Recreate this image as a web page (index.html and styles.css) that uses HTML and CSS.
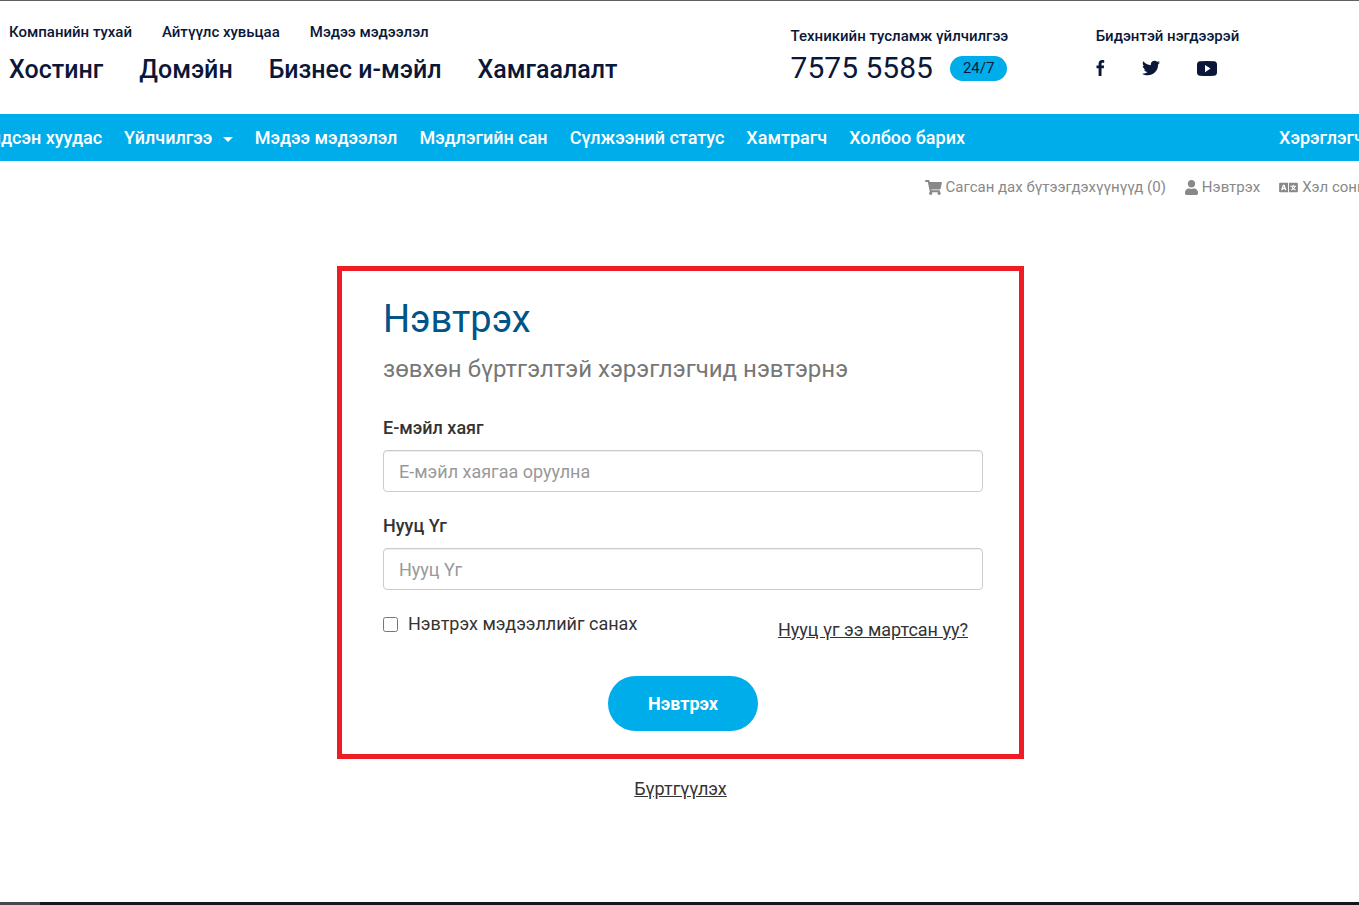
FILE: index.html
```html
<!DOCTYPE html>
<html lang="mn">
<head>
  <meta charset="UTF-8">
  <title>Нэвтрэх</title>
  <link rel="stylesheet" href="styles.css">
</head>
<body>
  <header class="header">
    <div>
      <nav class="top-links">
        <a href="#">Компанийн тухай</a>
        <a href="#">Айтүүлс хувьцаа</a>
        <a href="#">Мэдээ мэдээлэл</a>
      </nav>
      <nav class="main-links">
        <a href="#">Хостинг</a>
        <a href="#">Домэйн</a>
        <a href="#">Бизнес и-мэйл</a>
        <a href="#">Хамгаалалт</a>
      </nav>
    </div>
    <div class="support">
      <p class="small-title">Техникийн тусламж үйлчилгээ</p>
      <div class="phone-row">
        <a class="phone" href="tel:75755585">7575 5585</a>
        <span class="badge">24/7</span>
      </div>
    </div>
    <div class="social">
      <p class="small-title">Бидэнтэй нэгдээрэй</p>
      <div class="social-icons">
        <a href="#" aria-label="Facebook">
          <svg width="9" height="16" viewBox="0 0 9 16"><path d="M8.2.2v2.6H6.8c-1 0-1.3.5-1.3 1.2v1.6h2.6l-.3 2.6H5.500V16H2.600V8.200H.5V5.600h2.100V3.700C2.600 1.400 4 .1 6.100.1c1 0 1.800.1 2.100.1z"/></svg>
        </a>
        <a href="#" aria-label="Twitter">
          <svg width="18" height="18" viewBox="0 0 512 512"><path d="M459.400 151.700c.3 4.500.3 9.100.3 13.600 0 138.700-105.600 298.600-298.600 298.600-59.500 0-114.700-17.200-161.100-47.100 8.400 1 16.600 1.300 25.300 1.300 49.100 0 94.200-16.600 130.300-44.800-46.100-1-84.800-31.200-98.100-72.800 6.500 1 13 1.600 19.800 1.600 9.400 0 18.800-1.300 27.600-3.600-48.100-9.700-84.100-52-84.100-103v-1.300c14 7.800 30.200 12.700 47.400 13.300-28.300-18.800-46.800-51-46.800-87.400 0-19.500 5.200-37.400 14.300-53 51.700 63.700 129.300 105.300 216.400 109.800-1.600-7.800-2.600-15.900-2.600-24 0-57.800 46.800-104.900 104.900-104.900 30.200 0 57.500 12.700 76.700 33.100 23.700-4.500 46.500-13.300 66.600-25.300-7.800 24.400-24.400 44.800-46.100 57.800 21.100-2.300 41.600-8.100 60.400-16.200-14.300 20.800-32.200 39.300-52.600 54.300z"/></svg>
        </a>
        <a href="#" aria-label="YouTube">
          <svg width="20" height="15" viewBox="0 0 20 15"><path fill-rule="evenodd" d="M3 .3Q10-.3 17 .3 20 .5 20 3.500v8q0 3-3 3.300-7 .4-14 0-3-.3-3-3.300v-8Q0 .5 3 .3zM8 4v7.200l5.500-3.600z"/></svg>
        </a>
      </div>
    </div>
  </header>

  <nav class="navbar">
    <ul class="nav-list">
      <li><a href="#">Үндсэн хуудас</a></li>
      <li><a href="#">Үйлчилгээ <span class="caret"></span></a></li>
      <li><a href="#">Мэдээ мэдээлэл</a></li>
      <li><a href="#">Мэдлэгийн сан</a></li>
      <li><a href="#">Сүлжээний статус</a></li>
      <li><a href="#">Хамтрагч</a></li>
      <li><a href="#">Холбоо барих</a></li>
    </ul>
    <a class="nav-account" href="#">Хэрэглэгч</a>
  </nav>

  <div class="user-bar">
    <a href="#">
      <svg width="17" height="15" viewBox="0 0 576 512"><path d="M528.100 301.300l47.300-208C578.800 78.300 567.400 64 552 64H159.200l-9.200-44.800C147.800 8 137.900 0 126.500 0H24C10.700 0 0 10.700 0 24v16c0 13.300 10.700 24 24 24h69.900l70.200 343.400C147.300 417.100 136 435.200 136 456c0 30.900 25.100 56 56 56s56-25.100 56-56c0-15.700-6.400-29.800-16.800-40h209.600C430.400 426.200 424 440.300 424 456c0 30.900 25.100 56 56 56s56-25.100 56-56c0-22.200-12.900-41.300-31.600-50.400l5.500-24.300c3.400-15-8-29.300-23.400-29.300H218.100l-6.500-32h293.100c11.200 0 20.900-7.800 23.400-18.700z"/></svg>
      Сагсан дах бүтээгдэхүүнүүд (0)
    </a>
    <a href="#">
      <svg width="13" height="15" viewBox="0 0 448 512"><path d="M224 256c70.700 0 128-57.300 128-128S294.700 0 224 0 96 57.300 96 128s57.300 128 128 128zm89.600 32h-16.700c-22.200 10.200-46.900 16-72.900 16s-50.600-5.800-72.900-16h-16.700C60.200 288 0 348.200 0 422.400V464c0 26.500 21.500 48 48 48h352c26.500 0 48-21.500 48-48v-41.600c0-74.200-60.200-134.400-134.400-134.400z"/></svg>
      Нэвтрэх
    </a>
    <a href="#">
      <svg width="19" height="15" viewBox="0 0 20 16"><path fill-rule="evenodd" d="M1 3h8.500v10H1q-1 0-1-1V4q0-1 1-1zm9.500 0H19q1 0 1 1v8q0 1-1 1h-8.500zM4 5l-2 6h1.500l.4-1.200h2L6.300 11h1.500l-2-6zm.9 1.700l.6 1.900H4.300zM14.500 5v1H12v1.100h1.200c.2.900.6 1.500 1.100 2.100q-.9.600-1.900.8l.5 1.100q1.300-.4 2.300-1.100.9.700 2.200 1.100l.5-1.100q-1-.3-1.800-.8.900-.9 1.100-2.100H18V6h-2.400V5zm-.2 2.100h1.800q-.3.800-.9 1.400-.6-.6-.9-1.400z"/></svg>
      Хэл сонгох
    </a>
  </div>

  <main class="content">
    <form class="login-box">
      <h1>Нэвтрэх</h1>
      <p class="subtitle">зөвхөн бүртгэлтэй хэрэглэгчид нэвтэрнэ</p>
      <label class="field-label" for="email">Е-мэйл хаяг</label>
      <input class="field" type="email" id="email" name="email" placeholder="Е-мэйл хаягаа оруулна">
      <label class="field-label" for="password">Нууц Үг</label>
      <input class="field" type="password" id="password" name="password" placeholder="Нууц Үг">
      <div class="options">
        <label class="remember"><input type="checkbox" name="remember">Нэвтрэх мэдээллийг санах</label>
        <a class="forgot" href="#">Нууц үг ээ мартсан уу?</a>
      </div>
      <button type="submit">Нэвтрэх</button>
    </form>
    <a class="register" href="#">Бүртгүүлэх</a>
  </main>

  <div class="bottom-bar"></div>
</body>
</html>
```

FILE: styles.css
```css
* {
  box-sizing: border-box;
}

body {
  margin: 0;
  min-height: 100vh;
  display: flex;
  flex-direction: column;
  font-family: Roboto, sans-serif;
  font-size: 18px;
  line-height: 26px;
  color: #333;
  background-color: #fff;
  overflow-x: hidden;
}

a {
  color: inherit;
  text-decoration: none;
}

svg {
  display: block;
  fill: currentColor;
}

.header {
  display: grid;
  grid-template-columns: 781fr 305fr 263fr;
  padding: 21px 0 28px 9px;
  border-top: 1px solid #5f5f66;
  color: #0b1739;
}

.top-links {
  display: flex;
  gap: 30px;
  font-size: 15px;
  font-weight: 500;
  line-height: 20px;
}

.main-links {
  display: flex;
  gap: 36px;
  margin-top: 12px;
  font-size: 25px;
  font-weight: 500;
  line-height: 32px;
}

.small-title {
  margin: 4px 0 0;
  font-size: 15px;
  font-weight: 500;
  line-height: 20px;
}

.phone-row {
  display: flex;
  align-items: center;
  gap: 17px;
  margin-top: 4px;
}

.phone {
  font-size: 30px;
  line-height: 36px;
}

.badge {
  padding: 0 13px;
  border-radius: 13px;
  background-color: #00adeb;
  font-size: 15px;
  line-height: 25px;
}

.social-icons {
  display: flex;
  align-items: center;
  gap: 37px;
  margin-top: 13px;
}

.navbar {
  display: flex;
  justify-content: space-between;
  margin: 0 -5px 0 -20px;
  background-color: #00adeb;
  color: #fff;
  font-weight: 500;
  line-height: 47px;
  white-space: nowrap;
}

.nav-list {
  display: flex;
  gap: 22px;
  margin: 0;
  padding: 0;
  list-style: none;
}

.caret {
  display: inline-block;
  margin-left: 6px;
  vertical-align: middle;
  border-top: 5px solid #fff;
  border-left: 5px solid transparent;
  border-right: 5px solid transparent;
}

.user-bar {
  display: flex;
  justify-content: flex-end;
  gap: 19px;
  margin-right: -20px;
  padding-top: 13px;
  color: #888;
  font-size: 15px;
  white-space: nowrap;
}

.user-bar a {
  display: flex;
  align-items: center;
  gap: 4px;
}

.content {
  flex: 1;
  display: flex;
  flex-direction: column;
  align-items: center;
  padding: 66px 14px 40px 16px;
}

.login-box {
  width: 100%;
  max-width: 687px;
  padding: 24px 36px 23px 41px;
  border: 5px solid #ef1c24;
}

h1 {
  margin: 0;
  font-size: 38px;
  font-weight: 400;
  line-height: 48px;
  color: #005488;
}

.subtitle {
  margin: 10px 0 30px;
  font-size: 24px;
  line-height: 32px;
  color: #777;
}

.field-label {
  display: block;
  margin-bottom: 9px;
  font-weight: 500;
}

.field {
  display: block;
  width: 100%;
  height: 42px;
  margin-bottom: 21px;
  padding: 6px 15px;
  border: 1px solid #ccc;
  border-radius: 4px;
  box-shadow: inset 0 1px 1px rgba(0, 0, 0, 0.075);
  font-family: inherit;
  font-size: 18px;
  color: #555;
}

.field::placeholder {
  color: #999;
}

.options {
  display: flex;
  justify-content: space-between;
  align-items: flex-start;
  padding-right: 15px;
}

.remember {
  display: flex;
  align-items: center;
  gap: 10px;
}

.remember input {
  width: 15px;
  height: 15px;
  margin: 0;
}

.forgot {
  padding-top: 6px;
  text-decoration: underline;
}

button {
  display: block;
  width: 150px;
  height: 55px;
  margin: 33px auto 0;
  border: none;
  border-radius: 28px;
  background-color: #00adeb;
  color: #fff;
  font-family: inherit;
  font-size: 18px;
  font-weight: 700;
  cursor: pointer;
}

.register {
  margin-top: 17px;
  text-decoration: underline;
}

.bottom-bar {
  height: 3px;
  background: linear-gradient(to right, #484848 40px, #17171a 40px);
}
```
